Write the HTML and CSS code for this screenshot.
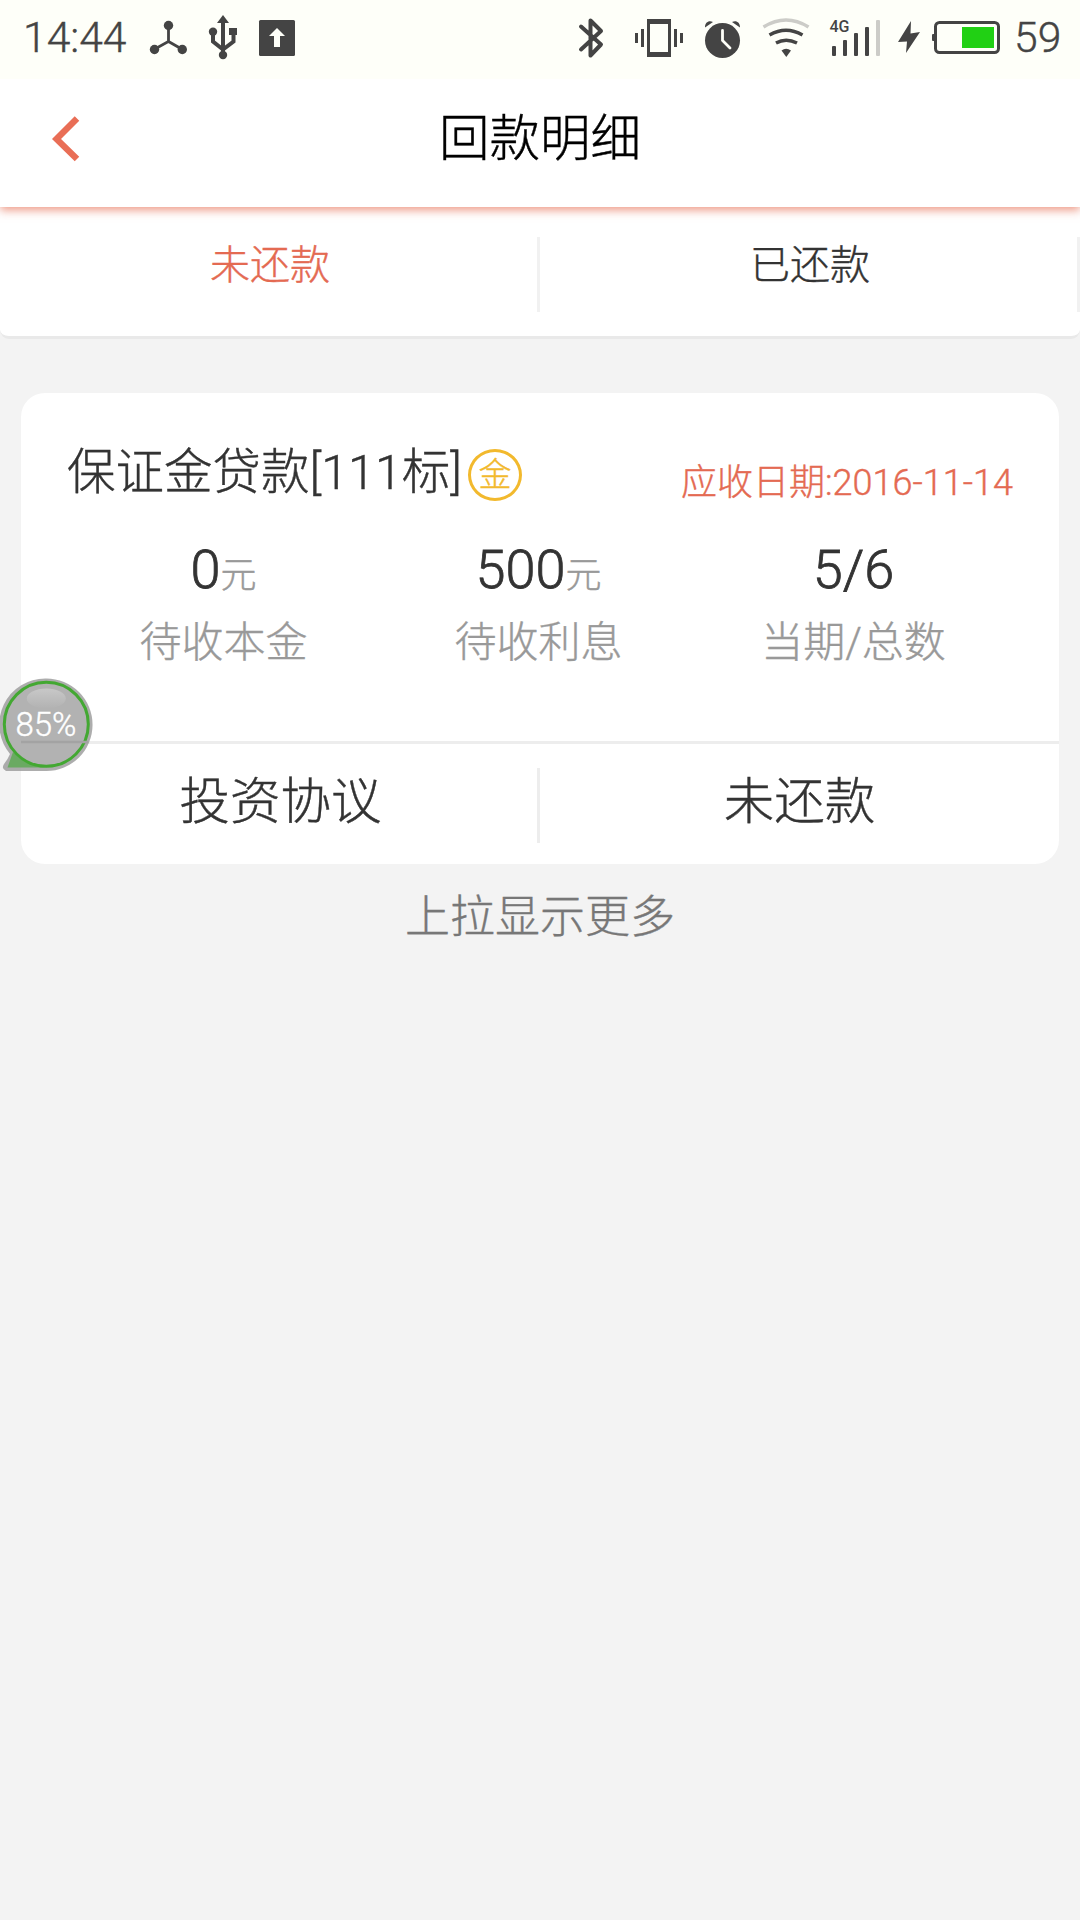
FILE: index.html
```html
<!DOCTYPE html>
<html lang="zh-CN">
<head>
<meta charset="utf-8">
<title>回款明细</title>
<link rel="stylesheet" href="styles.css">
</head>
<body>
<div class="statusbar">
  <span class="clock">14:44</span>
  <svg class="status-left" width="160" height="79" viewBox="140 0 160 79">
    <g stroke="#444" stroke-width="2.8" fill="none"><path d="M168.500 25V41.500L154 49.500M168.500 41.500L182.500 49.500"/></g>
    <g fill="#444"><circle cx="168.500" cy="25.500" r="4.700"/><circle cx="154.500" cy="49.500" r="4.700"/><circle cx="182.300" cy="49.500" r="4.700"/>
    <path d="M223 15L229 23H217Z"/><circle cx="213" cy="31.800" r="4.200"/><rect x="229" y="28" width="8" height="7"/><circle cx="223" cy="55" r="4.200"/>
    <rect x="259" y="20" width="36" height="36" rx="1.500"/></g>
    <path d="M223 20V55M213 32V41.500L223 49.500L233.500 41.500V33" fill="none" stroke="#444" stroke-width="4"/>
    <path d="M277 28L285 36H280V47H274V36H269Z" fill="#fefff9"/>
  </svg>
  <svg class="status-right" width="450" height="79" viewBox="560 0 450 79">
    <path d="M581 26.500L601 44.500L590.500 55.500V20.500L601 31L581 49.500" fill="none" stroke="#444" stroke-width="4" stroke-linecap="round" stroke-linejoin="round"/>
    <path fill="#444" fill-rule="evenodd" d="M647 19H671V57H647ZM650 24V52H668V24Z"/>
    <path d="M636.500 33V43M642.500 29V47M675.500 29V47M681.500 33V43" stroke="#444" stroke-width="3"/>
    <circle cx="722.500" cy="40.500" r="17.500" fill="#444"/>
    <path d="M705 27.500C705 22 709 20 713 22ZM740 27.500C740 22 736 20 732 22Z" fill="#444"/>
    <path d="M722.500 30.500V40.500L730 48" stroke="#fefff9" stroke-width="2.800" fill="none" stroke-linecap="round"/>
    <path d="M763.500 27Q786 13 808.500 27" fill="none" stroke="#ccccc8" stroke-width="3.500"/>
    <path d="M769.500 35Q786 25.500 802.500 35M776 43Q786 37.500 797 43" fill="none" stroke="#444" stroke-width="3.500"/>
    <path d="M781.500 50.500Q786 47 791 50.500L786.300 57Z" fill="#444"/>
    <g fill="#444"><rect x="832" y="46" width="4" height="10" rx="1"/><rect x="843" y="40" width="4" height="16" rx="1"/><rect x="854" y="33" width="4" height="23" rx="1"/><rect x="865" y="27" width="4" height="29" rx="1"/></g>
    <rect x="876" y="20" width="4" height="36" rx="1" fill="#ccccc8"/>
    <text x="829.500" y="32" class="network">4G</text>
    <path d="M911 21L898 42L907 41.500L906 53L920 32L910.500 33.500Z" fill="#444"/>
    <rect x="935.500" y="22.500" width="63" height="30" rx="4" fill="none" stroke="#444" stroke-width="3"/>
    <rect x="932" y="34" width="3" height="7" rx="1" fill="#444"/>
    <rect x="962" y="27" width="32" height="21" fill="#21d014"/>
  </svg>
  <span class="level">59</span>
</div>

<header class="header">
  <svg class="back" width="28" height="46" viewBox="0 0 28 46"><path d="M25 2.500L4.500 23L25 43" fill="none" stroke="#e96e56" stroke-width="6.400"/></svg>
  <h1 class="title">回款明细</h1>
</header>

<nav class="tabs">
  <div class="tab tab-active">未还款</div>
  <div class="tab">已还款</div>
</nav>

<main class="card">
  <div class="card-head">
    <span class="name">保证金贷款[111标]</span>
    <span class="badge">金</span>
    <span class="date">应收日期:2016-11-14</span>
  </div>
  <div class="stats">
    <div class="stat"><div class="value">0<span class="unit">元</span></div><div class="label">待收本金</div></div>
    <div class="stat"><div class="value">500<span class="unit">元</span></div><div class="label">待收利息</div></div>
    <div class="stat"><div class="value">5/6</div><div class="label">当期/总数</div></div>
  </div>
  <div class="actions">
    <div class="action">投资协议</div>
    <div class="action">未还款</div>
  </div>
</main>
<div class="more">上拉显示更多</div>

<div class="bubble">
  <svg class="bubble-shape" width="94" height="94" viewBox="0 0 94 94">
    <defs><linearGradient id="shine" x1="0" y1="0" x2="0" y2="1"><stop offset="0" stop-color="#c8c8c8"/><stop offset="1" stop-color="#b2b2b2"/></linearGradient></defs>
    <path d="M46.300 .500A46 46 0 1 1 46.300 93H6Q1 91 4 86Q8 81 10 76A46 46 0 0 1 46.300 .500Z" fill="#999" fill-opacity=".8"/>
    <path d="M13 74L7.500 89.500H46Q26 88 13 74Z" fill="#6aaa62"/>
    <circle cx="46.300" cy="46.300" r="42" fill="#b2b2b2" fill-opacity=".9" stroke="#43a832" stroke-width="3"/>
    <path d="M21 64H88" stroke="#a3a3a3" stroke-width="2.500"/>
    <ellipse cx="46.300" cy="20.500" rx="19.500" ry="10" fill="url(#shine)"/>
  </svg>
  <span class="bubble-text">85%</span>
</div>
</body>
</html>
```
FILE: styles.css
```css
* { box-sizing: border-box; }
body {
  margin: 0;
  width: 1080px;
  height: 1920px;
  overflow: hidden;
  position: relative;
  background: #f3f3f3;
  color: #333;
  font-family: Roboto, "Noto Sans CJK SC", sans-serif;
  font-weight: 300;
  -webkit-text-stroke-width: .4px;
}
.statusbar {
  display: flex;
  height: 79px;
  background: #fefff9;
  color: #444;
  font-size: 42.6px;
  line-height: 75px;
}
.clock { width: 140px; padding-left: 23px; }
.status-right { margin-left: 260px; }
.level { padding-left: 4px; }
.network { font: 500 16px Roboto, sans-serif; fill: #444; -webkit-text-stroke-width: 0; }

.header {
  display: grid;
  grid-template-columns: 90px 1fr 90px;
  align-items: center;
  height: 128px;
  padding-bottom: 8px;
  background: #fff;
  box-shadow: 0 3px 9px rgba(228, 95, 65, .65);
  clip-path: inset(0 0 -20px 0);
  position: relative;
}
.back { margin-left: 52px; }
.title {
  margin: 0;
  text-align: center;
  color: #000;
  font-size: 50.5px;
  line-height: 60px;
  font-weight: 300;
}

.tabs {
  display: flex;
  height: 132px;
  padding-top: 30px;
  background: #fff;
  border-bottom: 3px solid #e9e9e9;
  border-radius: 0 0 9px 9px;
}
.tab {
  flex: 1;
  height: 75px;
  padding-left: 3px;
  border-right: 3px solid #f1f1f1;
  text-align: center;
  font-size: 40px;
  line-height: 58px;
}
.tab-active { color: #e46a52; }

.card {
  margin: 54px 21px 0;
  height: 471px;
  background: #fff;
  border-radius: 24px;
}
.card-head {
  display: flex;
  height: 138px;
  padding: 48px 46px 0;
}
.name { font-size: 48.5px; line-height: 64px; }
.badge {
  width: 54px;
  height: 52px;
  margin: 8px 0 0 6px;
  border: 3px solid #f2b92d;
  border-radius: 50%;
  color: #f2b92d;
  font-size: 33px;
  line-height: 46px;
  text-align: center;
}
.date {
  margin-left: auto;
  padding-top: 19px;
  color: #e46a52;
  font-size: 36px;
  line-height: 46px;
}
.stats {
  display: grid;
  grid-template-columns: repeat(3, 315px);
  height: 210px;
  padding-left: 45px;
  text-align: center;
}
.value { height: 75px; font-size: 54px; line-height: 78px; -webkit-text-stroke-width: .8px; }
.unit { color: #999; font-size: 36px; -webkit-text-stroke-width: .4px; }
.label { color: #999; font-size: 42px; line-height: 74px; }
.actions {
  display: grid;
  grid-template-columns: 519px 519px;
  height: 123px;
  padding-top: 24px;
  border-top: 3px solid #ededed;
}
.action {
  height: 75px;
  text-align: center;
  font-size: 50.5px;
  line-height: 68px;
}
.action:first-child { border-right: 3px solid #ededed; padding-left: 3px; }
.more {
  padding-top: 22px;
  text-align: center;
  color: #777;
  font-size: 45px;
  line-height: 64px;
}

.bubble {
  position: absolute;
  left: 0;
  top: 678px;
  width: 94px;
  height: 94px;
}
.bubble-shape { display: block; }
.bubble-text {
  position: absolute;
  left: 0;
  top: 0;
  width: 92px;
  text-align: center;
  color: #fff;
  font-size: 33px;
  line-height: 94px;
}
```
